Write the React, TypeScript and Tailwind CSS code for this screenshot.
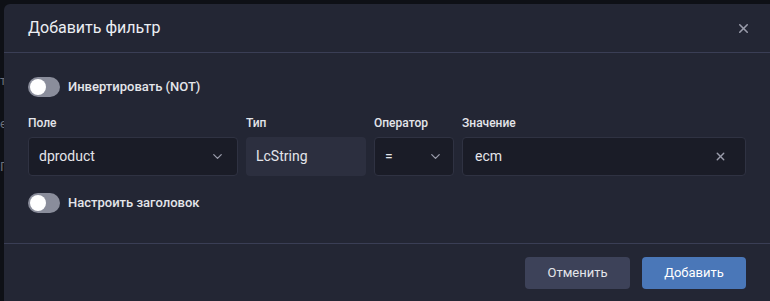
import { ChevronDown, X } from "lucide-react";

function Toggle({ label }: { label: string }) {
  return (
    <div className="flex items-center gap-2">
      <div className="w-8 h-5 rounded-full bg-[#8a8d9b] flex items-center px-[2px]">
        <div className="w-4 h-4 rounded-full bg-white"></div>
      </div>
      <span className="text-[13px] font-medium text-[#e4e5ea]">{label}</span>
    </div>
  );
}

export default function App() {
  return (
    <div className="w-[770px] h-[301px] bg-[#0e1016] flex overflow-hidden font-['Roboto',sans-serif]">
      <div className="w-1 flex flex-col gap-[30px] pt-[74px] text-[13px] text-[#6b6e7a] overflow-hidden leading-none">
        <span>т</span>
        <span>е</span>
        <span>П</span>
      </div>
      <div className="flex-1 flex flex-col pt-1">
        <div className="flex-1 bg-[#232634] rounded-tl-md flex flex-col">
          <div className="h-[49px] flex items-center justify-between pl-6 pr-[19px] border-b border-[#3a3e55]">
            <span className="text-[16px] text-[#eceef3]">Добавить фильтр</span>
            <X size={15} strokeWidth={2.5} className="text-[#9a9cab]" />
          </div>
          <div className="flex-1 px-6 pt-6 flex flex-col border-b border-[#3a3e55]">
            <Toggle label="Инвертировать (NOT)" />
            <div className="flex gap-2 mt-[19px]">
              <div className="flex flex-col gap-[7px] w-[210px]">
                <span className="text-[12px] font-medium text-[#e4e5ea] leading-[14px]">Поле</span>
                <div className="h-[39px] rounded-[4px] bg-[#1a1c27] border border-[#2f3242] flex items-center justify-between pl-[10px] pr-[12px]">
                  <span className="text-[14px] text-[#e4e5ea]">dproduct</span>
                  <ChevronDown size={15} className="text-[#9a9cab]" />
                </div>
              </div>
              <div className="flex flex-col gap-[7px] w-[120px]">
                <span className="text-[12px] font-medium text-[#e4e5ea] leading-[14px]">Тип</span>
                <div className="h-[39px] rounded-[4px] bg-[#2c2f3f] flex items-center pl-[10px]">
                  <span className="text-[14px] text-[#e4e5ea]">LcString</span>
                </div>
              </div>
              <div className="flex flex-col gap-[7px] w-[80px]">
                <span className="text-[12px] font-medium text-[#e4e5ea] leading-[14px]">Оператор</span>
                <div className="h-[39px] rounded-[4px] bg-[#1a1c27] border border-[#2f3242] flex items-center justify-between pl-[10px] pr-[10px]">
                  <span className="text-[14px] text-[#e4e5ea]">=</span>
                  <ChevronDown size={15} className="text-[#9a9cab]" />
                </div>
              </div>
              <div className="flex flex-col gap-[7px] w-[284px]">
                <span className="text-[12px] font-medium text-[#e4e5ea] leading-[14px]">Значение</span>
                <div className="h-[39px] rounded-[4px] bg-[#1a1c27] border border-[#2f3242] flex items-center justify-between pl-3 pr-[18px]">
                  <span className="text-[14px] text-[#e4e5ea]">ecm</span>
                  <X size={13} strokeWidth={2.5} className="text-[#9a9cab]" />
                </div>
              </div>
            </div>
            <div className="mt-[17px]">
              <Toggle label="Настроить заголовок" />
            </div>
          </div>
          <div className="h-[57px] flex items-center justify-end gap-3 pr-6">
            <button className="w-[105px] h-8 rounded-[4px] bg-[#3d4259] text-[13px] text-[#e4e5ea]">
              Отменить
            </button>
            <button className="w-[104px] h-8 rounded-[4px] bg-[#4a77b8] text-[13px] text-white">
              Добавить
            </button>
          </div>
        </div>
      </div>
    </div>
  );
}
